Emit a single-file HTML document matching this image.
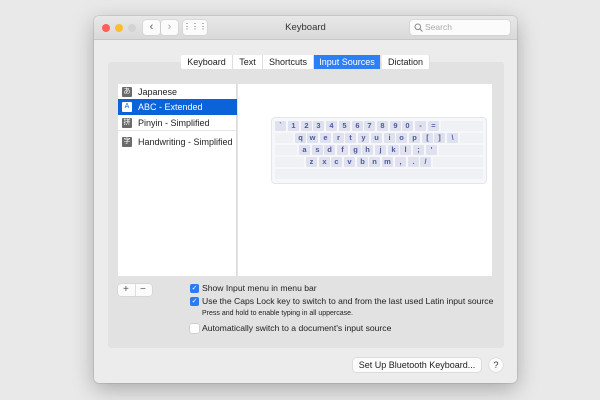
<!DOCTYPE html>
<html><head><style>
*{margin:0;padding:0;box-sizing:border-box}
body{width:600px;height:400px;background:#e9e9e9;font-family:"Liberation Sans",sans-serif;position:relative;overflow:hidden}
.a{position:absolute}
.win{left:94px;top:16px;width:423px;height:367px;background:#ececec;border-radius:5px;box-shadow:0 6px 22px rgba(0,0,0,.28),0 0 0 1px rgba(0,0,0,.08);overflow:hidden}
.title{left:0;top:0;width:423px;height:24px;background:linear-gradient(#e8e8e8,#d9d9d9);border-bottom:1px solid #c8c8c8}
.dot{width:8px;height:8px;border-radius:50%;top:8px}
.btn{background:#fbfbfb;border-radius:3px;box-shadow:0 0 0 .5px #ccc}
.t{font-size:9px;color:#222;white-space:nowrap}
.tab{top:39px;height:14px;font-size:9px;line-height:14px;text-align:center;background:#fff;color:#222;border-right:1px solid #ddd}
.key{position:absolute;width:11px;height:10px;background:#dfe2ee;border-radius:1px;font-size:7.5px;line-height:10px;text-align:center;color:#4a5a9c;font-weight:bold}
.blank{position:absolute;height:10px;background:#f0f1f5;border-radius:1px}
.icon{position:absolute;left:4px;width:10px;height:10px;background:#6b6b6b;border-radius:1px;color:#fff;font-size:7px;line-height:10px;text-align:center}
.cb{width:9px;height:9px;border-radius:2px;background:#2b7bf2;color:#fff;font-size:7px;line-height:9px;text-align:center}
.c{font-size:8.6px}
</style></head><body>
<div class="a win">
 <div class="a title">
  <div class="a dot" style="left:8px;background:#fe5f57"></div>
  <div class="a dot" style="left:21px;background:#febc2e"></div>
  <div class="a dot" style="left:34px;background:#d3d3d3"></div>
  <div class="a btn" style="left:49px;top:4px;width:17px;height:15px;text-align:center;font-size:11px;line-height:14px;color:#555">&#8249;</div>
  <div class="a btn" style="left:67px;top:4px;width:17px;height:15px;text-align:center;font-size:11px;line-height:14px;color:#aaa">&#8250;</div>
  <div class="a btn" style="left:89px;top:4px;width:24px;height:15px;text-align:center;font-size:8px;line-height:14px;color:#555">&#8942;&#8942;&#8942;</div>
  <div class="a" style="left:0;width:423px;top:6px;text-align:center;font-size:9.5px;color:#333">Keyboard</div>
  <div class="a btn" style="left:316px;top:4px;width:100px;height:15px;font-size:8.5px;color:#aaa;line-height:15px;padding-left:15px">Search
   <svg class="a" style="left:4px;top:3px" width="9" height="9"><circle cx="3.8" cy="3.8" r="2.8" stroke="#888" fill="none"/><path d="M6 6L8.5 8.5" stroke="#888"/></svg></div>
 </div>
 <div class="a" style="left:14px;top:46px;width:396px;height:286px;background:#e2e2e2;border-radius:3px"></div>
 <div class="a tab" style="left:87px;width:52px;border-radius:2px 0 0 2px">Keyboard</div>
 <div class="a tab" style="left:139px;width:30px">Text</div>
 <div class="a tab" style="left:169px;width:51px">Shortcuts</div>
 <div class="a tab" style="left:220px;width:67px;background:#2d7ff5;color:#fff">Input Sources</div>
 <div class="a tab" style="left:288px;width:48px;border-radius:0 2px 2px 0">Dictation</div>
 <div class="a" style="left:24px;top:68px;width:119px;height:192px;background:#fff;border-right:1px solid #ddd"></div>
 <div class="a" style="left:144px;top:68px;width:254px;height:192px;background:#fff"></div>
 <div class="a" style="left:24px;top:68px;width:119px;height:16px"><div class="icon" style="top:3px">あ</div><div class="a t" style="left:20px;top:3px">Japanese</div></div>
 <div class="a" style="left:24px;top:83px;width:119px;height:16px;background:#0b63d9"><div class="icon" style="top:3px;background:#fff;color:#0b63d9">A</div><div class="a t" style="left:20px;top:3px;color:#fff">ABC - Extended</div></div>
 <div class="a" style="left:24px;top:99px;width:119px;height:16px;border-bottom:1px solid #e5e5e5"><div class="icon" style="top:3px">拼</div><div class="a t" style="left:20px;top:3px">Pinyin - Simplified</div></div>
 <div class="a" style="left:24px;top:118px;width:119px;height:16px"><div class="icon" style="top:3px">字</div><div class="a t" style="left:20px;top:3px">Handwriting - Simplified</div></div>
 <div class="a" style="left:178px;top:102px;width:214px;height:65px;background:#f6f7fa;border-radius:3px;box-shadow:0 0 0 1px #e4e6ec">
  <div style="position:relative">
   <div class="key" style="left:3px;top:3px">`</div><div class="key" style="left:16px;top:3px">1</div><div class="key" style="left:29px;top:3px">2</div><div class="key" style="left:41px;top:3px">3</div><div class="key" style="left:54px;top:3px">4</div><div class="key" style="left:67px;top:3px">5</div><div class="key" style="left:80px;top:3px">6</div><div class="key" style="left:92px;top:3px">7</div><div class="key" style="left:105px;top:3px">8</div><div class="key" style="left:118px;top:3px">9</div><div class="key" style="left:130px;top:3px">0</div><div class="key" style="left:143px;top:3px">-</div><div class="key" style="left:156px;top:3px">=</div><div class="blank" style="left:169px;top:3px;width:42px"></div>
   <div class="blank" style="left:3px;top:15px;width:18px"></div>
   <div class="key" style="left:23px;top:15px">q</div><div class="key" style="left:35px;top:15px">w</div><div class="key" style="left:48px;top:15px">e</div><div class="key" style="left:61px;top:15px">r</div><div class="key" style="left:73px;top:15px">t</div><div class="key" style="left:86px;top:15px">y</div><div class="key" style="left:99px;top:15px">u</div><div class="key" style="left:112px;top:15px">i</div><div class="key" style="left:124px;top:15px">o</div><div class="key" style="left:137px;top:15px">p</div><div class="key" style="left:150px;top:15px">[</div><div class="key" style="left:162px;top:15px">]</div><div class="key" style="left:175px;top:15px">\</div><div class="blank" style="left:188px;top:15px;width:23px"></div>
   <div class="blank" style="left:3px;top:27px;width:22px"></div>
   <div class="key" style="left:27px;top:27px">a</div><div class="key" style="left:40px;top:27px">s</div><div class="key" style="left:52px;top:27px">d</div><div class="key" style="left:65px;top:27px">f</div><div class="key" style="left:78px;top:27px">g</div><div class="key" style="left:90px;top:27px">h</div><div class="key" style="left:103px;top:27px">j</div><div class="key" style="left:116px;top:27px">k</div><div class="key" style="left:128px;top:27px">l</div><div class="key" style="left:141px;top:27px">;</div><div class="key" style="left:154px;top:27px">'</div><div class="blank" style="left:167px;top:27px;width:44px"></div>
   <div class="blank" style="left:3px;top:39px;width:29px"></div>
   <div class="key" style="left:34px;top:39px">z</div><div class="key" style="left:47px;top:39px">x</div><div class="key" style="left:59px;top:39px">c</div><div class="key" style="left:72px;top:39px">v</div><div class="key" style="left:85px;top:39px">b</div><div class="key" style="left:97px;top:39px">n</div><div class="key" style="left:110px;top:39px">m</div><div class="key" style="left:123px;top:39px">,</div><div class="key" style="left:136px;top:39px">.</div><div class="key" style="left:148px;top:39px">/</div><div class="blank" style="left:161px;top:39px;width:50px"></div>
   <div class="blank" style="left:3px;top:51px;width:208px"></div>
  </div>
 </div>
 <div class="a btn" style="left:24px;top:268px;width:34px;height:12px;font-size:10px;line-height:11px;color:#555"><span class="a" style="left:5px">+</span><span class="a" style="left:17px;top:0;width:1px;height:12px;background:#ddd"></span><span class="a" style="left:22px">&#8722;</span></div>
 <div class="a cb" style="left:96px;top:268px">&#10003;</div><div class="a t c" style="left:108px;top:267px">Show Input menu in menu bar</div>
 <div class="a cb" style="left:96px;top:281px">&#10003;</div><div class="a t c" style="left:108px;top:280px">Use the Caps Lock key to switch to and from the last used Latin input source</div>
 <div class="a t" style="left:108px;top:294px;font-size:7px">Press and hold to enable typing in all uppercase.</div>
 <div class="a" style="left:96px;top:308px;width:9px;height:9px;border-radius:2px;background:#fff;box-shadow:0 0 0 .5px #bbb"></div><div class="a t c" style="left:108px;top:307px">Automatically switch to a document's input source</div>
 <div class="a btn" style="left:259px;top:342px;width:128px;height:14px;font-size:9px;line-height:14px;text-align:center;color:#222">Set Up Bluetooth Keyboard...</div>
 <div class="a btn" style="left:395px;top:342px;width:14px;height:14px;border-radius:50%;font-size:9px;line-height:14px;text-align:center;color:#333">?</div>
</div>
</body></html>
